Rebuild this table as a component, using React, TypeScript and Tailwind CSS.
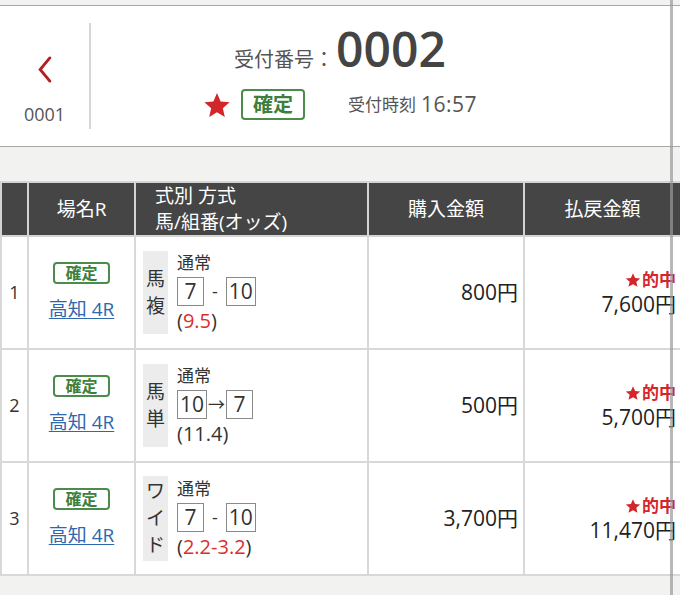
import React from 'react';

type Odds = { text: string; red: boolean };

type Bet = {
  no: number;
  kind: string[];
  first: string;
  join: string;
  second: string;
  odds: Odds;
  buy: string;
  pay: string;
};

const bets: Bet[] = [
  { no: 1, kind: ['馬', '複'], first: '7', join: '-', second: '10', odds: { text: '9.5', red: true }, buy: '800円', pay: '7,600円' },
  { no: 2, kind: ['馬', '単'], first: '10', join: '→', second: '7', odds: { text: '11.4', red: false }, buy: '500円', pay: '5,700円' },
  { no: 3, kind: ['ワ', 'イ', 'ド'], first: '7', join: '-', second: '10', odds: { text: '2.2-3.2', red: true }, buy: '3,700円', pay: '11,470円' },
];

const Star: React.FC<{ className?: string }> = ({ className }) => (
  <svg viewBox="0 0 24 24" className={className} fill="currentColor">
    <path d="M12 1.8l3.1 7.1 7.7.7-5.8 5.1 1.7 7.6L12 18.3l-6.7 4 1.7-7.6-5.8-5.1 7.7-.7z" />
  </svg>
);

const NumBox: React.FC<{ value: string }> = ({ value }) => (
  <span className="inline-flex h-[29px] min-w-[27px] items-center justify-center border border-[#8a8a8a] px-[2px] text-[21px] leading-none text-[#333]">
    {value}
  </span>
);

export default function App() {
  return (
    <div
      className="relative min-h-[595px] w-[680px] overflow-hidden bg-[#f2f2f0] pt-[5px] text-[#333]"
      style={{ fontFamily: '"Open Sans", "Noto Sans CJK JP", sans-serif' }}
    >
      {/* receipt header */}
      <div className="grid h-[142px] grid-cols-[91px_1fr_91px] items-center border-y border-[#a8a8a8] bg-white">
        <div className="flex h-[106px] flex-col items-center justify-center border-r-2 border-[#d6d6d6] pt-[26px]">
          <svg viewBox="0 0 16 28" className="h-[27px] w-[16px] text-[#b42020]" fill="none" stroke="currentColor" strokeWidth="3" strokeLinecap="round">
            <path d="M13 2L3 14l10 12" />
          </svg>
          <span className="mt-[22px] text-[18px] leading-none text-[#555]">0001</span>
        </div>
        <div className="flex flex-col items-center self-start pt-[19px]">
          <div className="flex items-baseline">
            <span className="text-[20px] text-[#555]">受付番号：</span>
            <span className="ml-[2px] text-[48px] font-semibold leading-none text-[#444]">0002</span>
          </div>
          <div className="mt-[14px] flex items-center">
            <Star className="h-[28px] w-[28px] text-[#d3262b]" />
            <span className="ml-[10px] rounded-[4px] border-2 border-[#4b8c4b] px-[10px] py-[1px] text-[20px] font-bold leading-[25px] text-[#3d7f3d]">
              確定
            </span>
            <span className="ml-[43px] text-[17px] text-[#555]">受付時刻</span>
            <span className="ml-[5px] text-[21px] tracking-[0.5px] text-[#555]">16:57</span>
          </div>
        </div>
        <div />
      </div>

      {/* bet table */}
      <table className="mt-[34px] w-[680px] table-fixed border-collapse bg-white">
        <colgroup>
          <col className="w-[27px]" />
          <col className="w-[107px]" />
          <col className="w-[233px]" />
          <col className="w-[156px]" />
          <col className="w-[157px]" />
        </colgroup>
        <thead>
          <tr className="h-[51px] bg-[#454545] text-[19px] text-white">
            <th className="border-2 border-[#d4d4d4]" />
            <th className="border-2 border-[#d4d4d4] font-normal">場名R</th>
            <th className="border-2 border-[#d4d4d4] pl-[19px] text-left font-normal leading-[26px]">
              <div>式別 方式</div>
              <div>馬/組番(オッズ)</div>
            </th>
            <th className="border-2 border-[#d4d4d4] font-normal">購入金額</th>
            <th className="border-2 border-[#d4d4d4] font-normal">払戻金額</th>
          </tr>
        </thead>
        <tbody>
          {bets.map((bet) => (
            <tr key={bet.no} className="h-[113px]">
              <td className="border-2 border-[#d8d8d8] text-center text-[18px] text-[#333]">{bet.no}</td>
              <td className="border-2 border-[#d8d8d8]">
                <div className="flex flex-col items-center">
                  <span className="mt-[-4px] rounded-[4px] border-2 border-[#4b8c4b] px-[10px] text-[16px] font-bold leading-[18px] text-[#3d7f3d]">
                    確定
                  </span>
                  <a className="mt-[16px] text-[19px] leading-none text-[#2f67ad] underline underline-offset-2">高知 4R</a>
                </div>
              </td>
              <td className="border-2 border-[#d8d8d8] pl-[7px]">
                <div className="flex items-center">
                  <div className="flex w-[25px] flex-col items-center justify-center self-stretch bg-[#ececec] py-[2px] text-[19px] leading-[27px] text-[#333]">
                    {bet.kind.map((ch, i) => (
                      <span key={i}>{ch}</span>
                    ))}
                  </div>
                  <div className="ml-[9px] flex flex-col">
                    <span className="text-[17px] leading-[24px] text-[#333]">通常</span>
                    <div className="mt-[2px] flex items-center">
                      <NumBox value={bet.first} />
                      <span className={bet.join === '→' ? 'mx-[1px] text-[17px]' : 'mx-[8px] text-[18px]'}>{bet.join}</span>
                      <NumBox value={bet.second} />
                    </div>
                    <span className="mt-[2px] text-[20px] leading-[26px] text-[#333]">
                      (<span className={bet.odds.red ? 'text-[#dc2d2d]' : ''}>{bet.odds.text}</span>)
                    </span>
                  </div>
                </div>
              </td>
              <td className="border-2 border-[#d8d8d8] pr-[5px] text-right text-[21px] text-[#222]">{bet.buy}</td>
              <td className="border-2 border-[#d8d8d8] pr-[4px] text-right">
                <div className="flex items-center justify-end text-[17px] font-bold leading-[20px] text-[#d3262b]">
                  <Star className="mr-[1px] h-[16px] w-[16px]" />
                  的中
                </div>
                <div className="mt-[2px] text-[21px] leading-[24px] text-[#222]">{bet.pay}</div>
              </td>
            </tr>
          ))}
        </tbody>
      </table>

      {/* scroll bar overlay */}
      <div className="absolute top-0 right-[7px] h-full w-[3px] bg-[#9a9a9a]/70" />
    </div>
  );
}
